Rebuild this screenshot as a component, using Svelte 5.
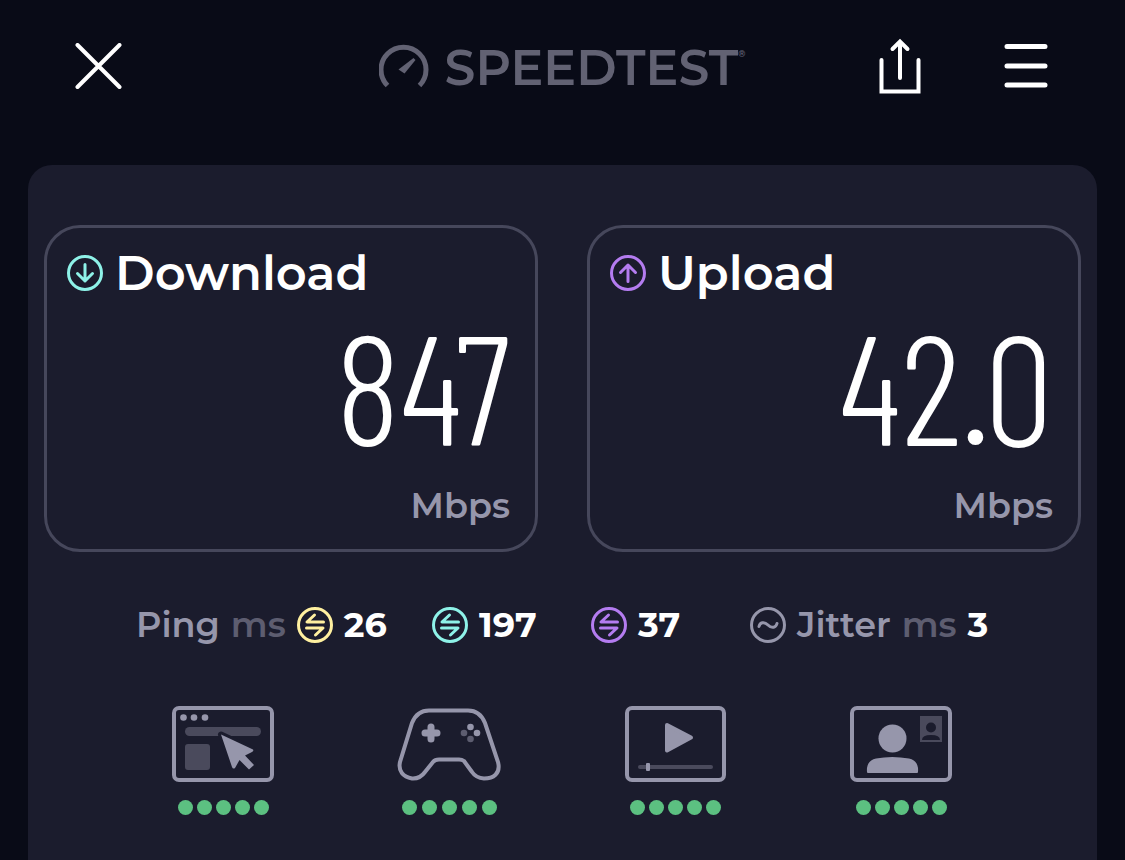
<script>
    const results = [
        { name: "Download", value: "847", kind: "download", arrow: "M18 9.5V26M10.500 18.500L18 26L25.500 18.500" },
        { name: "Upload", value: "42.0", kind: "upload", arrow: "M18 26.500V10M10.500 17.500L18 10L25.500 17.500" },
    ];

    const pings = [
        { kind: "idle", label: "Idle ping", value: 26 },
        { kind: "download", label: "Download ping", value: 197 },
        { kind: "upload", label: "Upload ping", value: 37 },
    ];

    const activities = [
        { id: "web", label: "Web browsing", score: 5 },
        { id: "gaming", label: "Gaming", score: 5 },
        { id: "video", label: "Video streaming", score: 5 },
        { id: "chat", label: "Video chat", score: 5 },
    ];
</script>

<div class="page">
    <header>
        <button class="close" aria-label="Close">
            <svg width="47" height="47" viewBox="0 0 47 47">
                <path d="M2.500 2L44.500 44M44.500 2L2.500 44" />
            </svg>
        </button>

        <div class="logo">
            <svg width="52" height="52" viewBox="0 0 52 52">
                <path class="dial" d="M8.500 45.500A22.500 22.500 0 1 1 40.500 45.500" />
                <path class="needle" d="M34.500 18L36.500 20L25.500 33.500L19.500 29.500Z" />
            </svg>
            <span class="name">SPEEDTEST<sup>®</sup></span>
        </div>

        <div class="actions">
            <button aria-label="Share">
                <svg width="44" height="56" viewBox="0 0 44 56">
                    <path d="M3.500 22V53.500H40.500V22M22 40V4M14.500 11L22 3.500L29.500 11" />
                </svg>
            </button>
            <button aria-label="Menu">
                <svg width="46" height="56" viewBox="0 0 46 56">
                    <path class="thick" d="M4 8.500H42M4 28H42M4 47H42" />
                </svg>
            </button>
        </div>
    </header>

    <main>
        <div class="results">
            {#each results as result}
                <section class="card">
                    <h2>
                        <svg class="round {result.kind}" width="36" height="36" viewBox="0 0 36 36">
                            <circle cx="18" cy="18" r="16.500" />
                            <path d={result.arrow} />
                        </svg>
                        {result.name}
                    </h2>
                    <p class="value">{result.value}</p>
                    <p class="unit">Mbps</p>
                </section>
            {/each}
        </div>

        <div class="latency">
            {#each pings as ping, index}
                <div class="stat">
                    {#if index === 0}
                        <span class="title">Ping</span>
                        <span class="ms">ms</span>
                    {/if}
                    <svg class="round {ping.kind}" width="36" height="36" viewBox="0 0 36 36" role="img" aria-label={ping.label}>
                        <circle cx="18" cy="18" r="16.500" />
                        <path d="M17.500 8L10 15H26.500M9.500 21H26L18.500 28" />
                    </svg>
                    <strong>{ping.value}</strong>
                </div>
            {/each}
            <div class="stat">
                <svg class="round jitter" width="36" height="36" viewBox="0 0 36 36">
                    <circle cx="18" cy="18" r="16.500" />
                    <path d="M9 19.500C10 15.500 14 14 18 18S26 20.500 27 16.500" />
                </svg>
                <span class="title">Jitter</span>
                <span class="ms">ms</span>
                <strong>3</strong>
            </div>
        </div>

        <div class="activities">
            {#each activities as activity}
                <div class="activity">
                    <svg width="104" height="76" viewBox="0 0 104 76" role="img" aria-label={activity.label}>
                        {#if activity.id === "web"}
                            <rect class="line" x="3" y="2" width="98" height="72" rx="5" />
                            <circle class="fill" cx="12.500" cy="11.500" r="3.300" />
                            <circle class="fill" cx="23" cy="11.500" r="3.300" />
                            <circle class="fill" cx="34" cy="11.500" r="3.300" />
                            <rect class="dim" x="14" y="21" width="76" height="9" rx="4.500" />
                            <rect class="dim" x="14" y="38" width="25" height="26" rx="3" />
                            <path class="cursor" d="M50 28.500L82 43.500Q83 45 81 46L74 49.500L83 59L78 63.500L68.500 54L64 62Q62 63.500 61 61Z" />
                        {:else if activity.id === "gaming"}
                            <path class="line" d="M32 4.500H71Q83 4.500 88 17L101 56C104 68 96 72.500 87 72.500Q79 72 75 66L67 55Q65 53.500 62 53.500H42Q38 53.500 36 56L28 66Q23 73 15 72.500C6 71 1 65 3 56L15 17Q20 4.500 32 4.500Z" />
                            <path class="pad" d="M34 21V33M28 27H40" />
                            <circle class="fill" cx="73.500" cy="21" r="3.300" />
                            <circle class="fill" cx="80" cy="27" r="3.300" />
                            <circle class="faint" cx="67" cy="27" r="3.300" />
                            <circle class="faint" cx="73.500" cy="33" r="3.300" />
                        {:else if activity.id === "video"}
                            <rect class="line" x="4" y="2" width="97" height="72" rx="5" />
                            <path class="play" d="M44 19L68 31.500L44 44.500Z" />
                            <path class="track" d="M17 61H88" />
                            <rect class="fill" x="23" y="57" width="4" height="8" rx="1" />
                        {:else}
                            <rect class="line" x="3" y="2" width="98" height="72" rx="5" />
                            <circle class="fill" cx="43.500" cy="32.500" r="14" />
                            <path class="fill" d="M18 66Q17 55 27 52.500Q43 49.500 60 52.500Q70 55 69 66Q69 67 68 67H19Q18 67 18 66Z" />
                            <rect class="dim" x="71" y="10" width="22" height="26" />
                            <circle class="dark" cx="82" cy="21.500" r="5" />
                            <path class="dark" d="M73 34Q73 29 82 29T91 34Z" />
                        {/if}
                    </svg>
                    <div class="score {activity.id}" role="img" aria-label="{activity.score} out of 5">
                        {#each Array(activity.score) as _}
                            <span></span>
                        {/each}
                    </div>
                </div>
            {/each}
        </div>
    </main>
</div>

<style>
    :global(body) {
        margin: 0;
        background: #090b17;
    }

    .page {
        display: flex;
        flex-direction: column;
        box-sizing: border-box;
        min-height: 100vh;
        padding: 0 28px;
        background: #090b17;
        color: #fff;
        font-family: Montserrat, Inter, "Open Sans", sans-serif;
    }

    header {
        display: grid;
        grid-template-columns: 1fr auto 1fr;
        align-items: center;
        box-sizing: border-box;
        height: 165px;
        padding: 0 48px 33px 47px;
    }

    button {
        display: flex;
        padding: 0;
        border: none;
        background: none;
        color: inherit;
        cursor: pointer;
    }

    svg {
        flex: none;
        fill: none;
        stroke: currentColor;
        stroke-linecap: round;
    }

    header svg {
        stroke-width: 4;
    }

    header .thick {
        stroke-width: 5;
    }

    .close {
        justify-self: start;
    }

    .actions {
        display: flex;
        justify-content: flex-end;
        gap: 81px;
    }

    .logo {
        display: flex;
        align-items: center;
        gap: 14px;
        color: #626273;
    }

    header .dial {
        stroke-width: 5;
        stroke-linecap: butt;
    }

    .needle {
        fill: currentColor;
        stroke: none;
    }

    .name {
        padding-top: 4px;
        font-size: 49px;
        font-weight: 600;
        line-height: 56px;
    }

    sup {
        font-size: 9px;
        line-height: 9px;
        vertical-align: 28px;
    }

    main {
        flex: 1;
        padding: 60px 16px 44px;
        border-radius: 24px 24px 0 0;
        background: #1b1c2d;
    }

    .results {
        display: grid;
        grid-template-columns: 1fr 1fr;
        gap: 49px;
    }

    .card {
        padding: 16px 25px 21px 20px;
        border: 3px solid #46475b;
        border-radius: 36px;
    }

    h2 {
        display: flex;
        align-items: center;
        gap: 12px;
        margin: 0;
        font-size: 48px;
        font-weight: 600;
        line-height: 58px;
    }

    .round {
        stroke-width: 3;
        stroke-linejoin: round;
    }

    .idle {
        color: #fff0a0;
    }

    .download {
        color: #8ef2e8;
    }

    .upload {
        color: #b47cf0;
    }

    p {
        margin: 0;
        text-align: right;
    }

    .value {
        font-family: "Barlow Condensed", "Roboto Condensed", "Liberation Sans Narrow", sans-serif;
        font-size: 155px;
        font-weight: 300;
        line-height: 164px;
    }

    .unit {
        padding-top: 18px;
        color: #9696ab;
        font-size: 35px;
        font-weight: 600;
        line-height: 44px;
    }

    .latency {
        display: grid;
        grid-template-columns: 296fr 159fr 159fr 239fr;
        padding: 50px 92px 0;
    }

    .stat {
        display: flex;
        align-items: center;
        gap: 11px;
        font-size: 35px;
        font-weight: 600;
        line-height: 46px;
        white-space: nowrap;
    }

    strong {
        font-weight: 700;
    }

    .title,
    .jitter {
        color: #9696ab;
    }

    .ms {
        color: #5d5d70;
    }

    .activities {
        display: grid;
        grid-template-columns: repeat(4, 1fr);
        padding: 58px 67px 0 66px;
    }

    .activity {
        display: flex;
        flex-direction: column;
        align-items: center;
        gap: 18px;
        color: #9696ab;
    }

    .line {
        stroke-width: 4;
    }

    .fill {
        fill: currentColor;
        stroke: none;
    }

    .dim {
        fill: #4a4a5c;
        stroke: none;
    }

    .faint {
        fill: #5d5d70;
        stroke: none;
    }

    .dark {
        fill: #1b1c2d;
        stroke: none;
    }

    .cursor {
        fill: currentColor;
        stroke: #1b1c2d;
        stroke-width: 6;
        stroke-linejoin: round;
        paint-order: stroke;
    }

    .pad {
        stroke-width: 7;
    }

    .play {
        fill: currentColor;
        stroke-width: 4;
        stroke-linejoin: round;
    }

    .track {
        stroke: #4a4a5c;
        stroke-width: 4;
    }

    .score {
        display: flex;
        gap: 4px;
    }

    .score.gaming {
        gap: 5px;
    }

    .score span {
        width: 15px;
        height: 15px;
        border-radius: 50%;
        background: #5cc081;
    }
</style>
